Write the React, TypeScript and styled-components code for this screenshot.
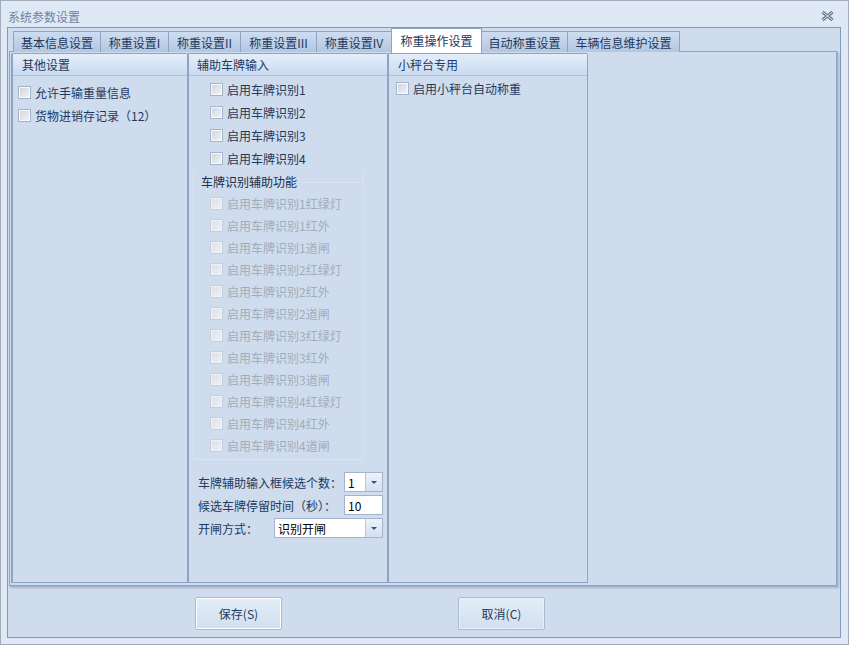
import React from 'react';
import styled, { createGlobalStyle, css } from 'styled-components';

const GlobalStyle = createGlobalStyle`
  html, body {
    margin: 0;
    padding: 0;
    background: #dfe9f5;
  }
  body {
    font-family: "Noto Sans CJK SC", "Liberation Sans", sans-serif;
    font-size: 12px;
    color: #1e395b;
  }
`;

const Window = styled.div`
  width: 849px;
  height: 645px;
  box-sizing: border-box;
  border: 1px solid #a3adba;
  background: #dfe9f5;
  display: flex;
  flex-direction: column;
`;

const TitleBar = styled.div`
  height: 26px;
  box-sizing: border-box;
  display: flex;
  align-items: center;
  justify-content: space-between;
  padding: 4px 14px 0 7px;
  color: #6f82a0;
  font-size: 12px;
`;

const Frame = styled.div`
  flex: 1;
  margin: 0 7px 6px 6px;
  border: 1px solid #8299bb;
  background: #cfdcee;
  display: flex;
  flex-direction: column;
`;

const TabStrip = styled.div`
  height: 24px;
  display: flex;
  align-items: flex-end;
  padding-left: 5px;
  position: relative;
  z-index: 2;
`;

const Tab = styled.div<{ $w: number; $active?: boolean }>`
  width: ${p => p.$w}px;
  height: 21px;
  box-sizing: border-box;
  border: 1px solid #8ea4c4;
  border-bottom: none;
  margin-right: -1px;
  display: flex;
  align-items: center;
  justify-content: center;
  white-space: nowrap;
  background: linear-gradient(#cddcf0, #b3c7e2);
  color: #1e395b;
  ${p =>
    p.$active &&
    css`
      height: 25px;
      background: #ffffff;
      margin-bottom: -1px;
      padding-bottom: 2px;
    `}
`;

const TabPage = styled.div`
  height: 535px;
  box-sizing: border-box;
  margin: -1px 3px 0 1px;
  border: 1px solid #8ea4c4;
  box-shadow: 1px 1px 0 #9fb2cd, 2px 2px 2px rgba(90, 110, 140, 0.35);
  padding: 1px;
  display: flex;
  background: #cfdcee;
`;

const Group = styled.div<{ $w: number }>`
  width: ${p => p.$w}px;
  height: 530px;
  box-sizing: border-box;
  border: 1px solid #8ea4c4;
  border-left-width: 2px;
  border-radius: 2px 2px 0 0;
  display: flex;
  flex-direction: column;
  & + & {
    margin-left: -1px;
  }
`;

const GroupHeader = styled.div<{ $pad: number }>`
  height: 21px;
  display: flex;
  align-items: center;
  padding-left: ${p => p.$pad}px;
  background: linear-gradient(#e4eefa, #c9dbf1);
  border-bottom: 1px solid #a9c0de;
`;

const GroupBody = styled.div<{ $pad: number; $top: number }>`
  display: flex;
  flex-direction: column;
  padding: ${p => p.$top}px 0 0 ${p => p.$pad}px;
`;

const CheckRow = styled.label<{ $h?: number; $disabled?: boolean }>`
  height: ${p => p.$h ?? 23}px;
  display: flex;
  align-items: center;
  gap: 3px;
  white-space: nowrap;
  color: ${p => (p.$disabled ? '#a2acb8' : '#1e395b')};
`;

const Box = styled.span<{ $disabled?: boolean }>`
  width: 13px;
  height: 13px;
  box-sizing: border-box;
  flex: none;
  border: 1px solid ${p => (p.$disabled ? '#c3cfdf' : '#a3b5cc')};
  box-shadow: inset 0 0 0 1px ${p => (p.$disabled ? '#eef2f7' : '#f8f9fb')};
  background: ${p =>
    p.$disabled
      ? 'linear-gradient(135deg, #dde2e8, #eef0f3)'
      : 'linear-gradient(135deg, #cfd4db, #f3f4f6)'};
  margin-right: 1px;
`;

const SubGroup = styled.fieldset`
  margin: 0 0 0 4px;
  width: 171px;
  height: 290px;
  box-sizing: border-box;
  border: 1px solid #dbe3ee;
  border-top: none;
  padding: 0 0 0 16px;
`;

const SubLegend = styled.div`
  height: 22px;
  display: flex;
  align-items: center;
  margin: 0 -1px 0 -9px;
  color: #1a2f4a;
  &::after {
    content: '';
    flex: 1;
    margin: 2px 0 0 4px;
    border-top: 1px solid #dbe3ee;
  }
`;

const FormArea = styled.div`
  display: flex;
  flex-direction: column;
  gap: 3px;
  margin: 12px 0 0 9px;
`;

const FormRow = styled.div`
  height: 20px;
  display: flex;
  align-items: center;
  white-space: nowrap;
`;

const FormLabel = styled.span<{ $w: number }>`
  width: ${p => p.$w}px;
  flex: none;
`;

const Field = styled.div<{ $w: number }>`
  width: ${p => p.$w}px;
  height: 20px;
  box-sizing: border-box;
  border: 1px solid #a3b5cc;
  background: #fff;
  display: flex;
  align-items: center;
  color: #000;
`;

const FieldText = styled.span`
  flex: 1;
  padding-left: 3px;
`;

const DropButton = styled.span`
  width: 16px;
  height: 100%;
  border-left: 1px solid #b5c6dc;
  background: linear-gradient(#eef3fa, #d3e0f0);
  display: flex;
  align-items: center;
  justify-content: center;
  &::after {
    content: '';
    border-left: 3px solid transparent;
    border-right: 3px solid transparent;
    border-top: 3px solid #3d5373;
  }
`;

const ButtonBar = styled.div`
  flex: 1;
  display: flex;
  align-items: flex-start;
  padding: 11px 0 0 187px;
  gap: 176px;
`;

const Button = styled.button<{ $default?: boolean }>`
  width: 87px;
  height: 33px;
  border: 1px solid #a9bad2;
  border-radius: 2px;
  background: linear-gradient(#e4edf8, #d2dff0);
  box-shadow: inset 0 0 0 1px ${p => (p.$default ? '#ffffff' : '#e8eff9')};
  font-family: "Noto Sans CJK SC", "Liberation Sans", sans-serif;
  font-size: 12px;
  color: #1e395b;
  padding: 0;
`;

const tabs = [
  { label: '基本信息设置', w: 88 },
  { label: '称重设置I', w: 69 },
  { label: '称重设置II', w: 73 },
  { label: '称重设置III', w: 77 },
  { label: '称重设置IV', w: 76 },
  { label: '称重操作设置', w: 91, active: true },
  { label: '自动称重设置', w: 87 },
  { label: '车辆信息维护设置', w: 113 },
];

const plate = ['启用车牌识别1', '启用车牌识别2', '启用车牌识别3', '启用车牌识别4'];

const aux: string[] = [];
[1, 2, 3, 4].forEach(n => {
  aux.push(`启用车牌识别${n}红绿灯`, `启用车牌识别${n}红外`, `启用车牌识别${n}道闸`);
});

const CloseIcon = () => (
  <svg width="13" height="10" viewBox="0 0 13 10">
    <path d="M1.5 1 L11.5 9 M11.5 1 L1.5 9" stroke="#5a6a80" strokeWidth="3" />
    <path d="M1.5 1 L11.5 9 M11.5 1 L1.5 9" stroke="#eef3f9" strokeWidth="1" />
  </svg>
);

export default function App() {
  return (
    <>
      <GlobalStyle />
      <Window>
        <TitleBar>
          <span>系统参数设置</span>
          <CloseIcon />
        </TitleBar>
        <Frame>
          <TabStrip>
            {tabs.map(t => (
              <Tab key={t.label} $w={t.w} $active={t.active}>
                {t.label}
              </Tab>
            ))}
          </TabStrip>
          <TabPage>
            <Group $w={177}>
              <GroupHeader $pad={9}>其他设置</GroupHeader>
              <GroupBody $pad={5} $top={5}>
                <CheckRow>
                  <Box />
                  允许手输重量信息
                </CheckRow>
                <CheckRow>
                  <Box />
                  货物进销存记录（12）
                </CheckRow>
              </GroupBody>
            </Group>
            <Group $w={201}>
              <GroupHeader $pad={8}>辅助车牌输入</GroupHeader>
              <GroupBody $pad={21} $top={2}>
                {plate.map(p => (
                  <CheckRow key={p}>
                    <Box />
                    {p}
                  </CheckRow>
                ))}
              </GroupBody>
              <SubGroup>
                <SubLegend>车牌识别辅助功能</SubLegend>
                {aux.map(a => (
                  <CheckRow key={a} $h={22} $disabled>
                    <Box $disabled />
                    {a}
                  </CheckRow>
                ))}
              </SubGroup>
              <FormArea>
                <FormRow>
                  <FormLabel $w={146}>车牌辅助输入框候选个数：</FormLabel>
                  <Field $w={39}>
                    <FieldText>1</FieldText>
                    <DropButton />
                  </Field>
                </FormRow>
                <FormRow>
                  <FormLabel $w={146}>候选车牌停留时间（秒）：</FormLabel>
                  <Field $w={39}>
                    <FieldText>10</FieldText>
                  </Field>
                </FormRow>
                <FormRow>
                  <FormLabel $w={76}>开闸方式：</FormLabel>
                  <Field $w={109}>
                    <FieldText>识别开闸</FieldText>
                    <DropButton />
                  </Field>
                </FormRow>
              </FormArea>
            </Group>
            <Group $w={201}>
              <GroupHeader $pad={9}>小秤台专用</GroupHeader>
              <GroupBody $pad={7} $top={1}>
                <CheckRow>
                  <Box />
                  启用小秤台自动称重
                </CheckRow>
              </GroupBody>
            </Group>
          </TabPage>
          <ButtonBar>
            <Button $default>保存(S)</Button>
            <Button>取消(C)</Button>
          </ButtonBar>
        </Frame>
      </Window>
    </>
  );
}
